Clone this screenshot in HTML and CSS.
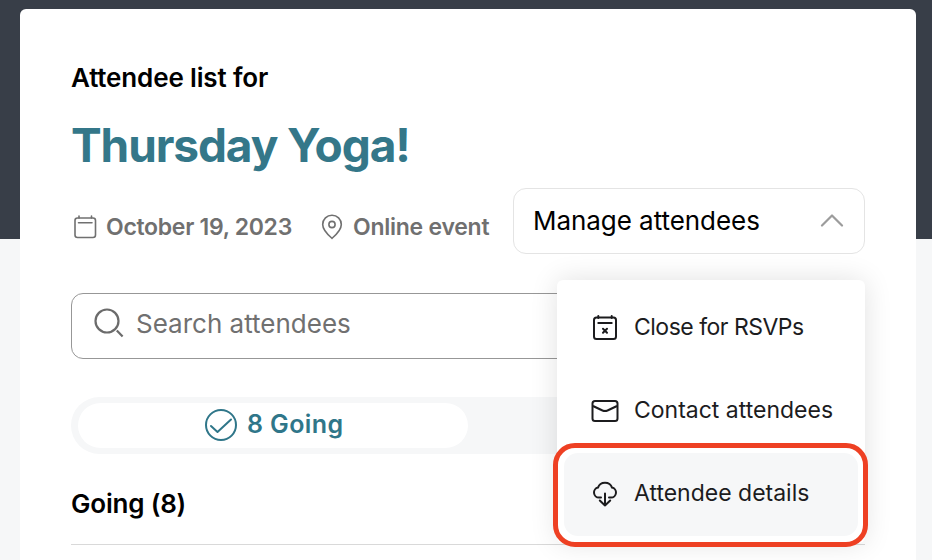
FILE: index.html
```html
<!DOCTYPE html>
<html lang="en">
<head>
  <meta charset="UTF-8">
  <title>Attendee list</title>
  <link rel="stylesheet" href="styles.css">
</head>
<body>

  <main class="card">
    <h2 class="subtitle">Attendee list for</h2>
    <h1 class="title">Thursday Yoga!</h1>

    <!-- Event info and manage dropdown -->
    <div class="event-row">
      <div class="meta">
        <svg width="24" height="24" viewBox="0 0 24 24" fill="none" stroke="#707070" stroke-width="1.6" stroke-linecap="round">
          <rect x="1" y="3" width="20.5" height="19.5" rx="2.5"/>
          <path d="M5 1v2M17.5 1v2M4.5 7.8H18"/>
        </svg>
        <span class="date">October 19, 2023</span>
        <svg class="icon-pin" width="22" height="26" viewBox="0 0 22 26" fill="none" stroke="#707070" stroke-width="1.6" stroke-linejoin="round">
          <path d="M11 24.3C8 21.7 1.7 16.5 1.7 10.5a9.3 9.3 0 0 1 18.6 0c0 6-6.3 11.2-9.3 13.8z"/>
          <circle cx="11" cy="10.5" r="3.1"/>
        </svg>
        <span class="place">Online event</span>
      </div>

      <div class="dropdown">
        <button class="manage">
          <span>Manage attendees</span>
          <svg width="24" height="14" viewBox="0 0 24 14" fill="none" stroke="#9c9c9c" stroke-width="2.2" stroke-linecap="round" stroke-linejoin="round">
            <path d="M2 12.5l10-10 10 10"/>
          </svg>
        </button>
        <div class="menu">
          <a class="item close">
            <svg width="28" height="28" viewBox="0 0 28 28" fill="none" stroke="#1c1c1e" stroke-width="2" stroke-linecap="round">
              <rect x="3" y="4.5" width="22" height="21.5" rx="2.5"/>
              <path d="M7.3 3v2M20.7 3v2M7.3 10h13.4M12 15.800l4 4M16 15.800l-4 4"/>
            </svg>
            <span>Close for RSVPs</span>
          </a>
          <a class="item">
            <svg width="28" height="28" viewBox="0 0 28 28" fill="none" stroke="#1c1c1e" stroke-width="2" stroke-linejoin="round">
              <rect x="1.5" y="5" width="25" height="20" rx="2.5"/>
              <path d="M2 10l9.500 4.500q2.500 1 5 0L26 10"/>
            </svg>
            <span>Contact attendees</span>
          </a>
          <a class="item active">
            <svg width="28" height="28" viewBox="0 0 28 28" fill="none" stroke="#1c1c1e" stroke-width="2" stroke-linecap="round" stroke-linejoin="round">
              <path d="M10 18.500H8a5 5 0 0 1-1-9.900C8 5.500 10.700 3.700 14 3.700s6 1.800 7 4.900a5 5 0 0 1-1 9.900h-2"/>
              <path d="M14 14.500v12M8.800 21.500l5.200 5 5.200-5"/>
            </svg>
            <span>Attendee details</span>
          </a>
          <div class="highlight"></div>
        </div>
      </div>
    </div>

    <!-- Search -->
    <div class="search">
      <svg width="32" height="32" viewBox="0 0 32 32" fill="none" stroke="#6b6b6b" stroke-width="2.2">
        <circle cx="14" cy="13" r="11.5"/>
        <path d="M23.8 22.5l5.800 6"/>
      </svg>
      <span>Search attendees</span>
    </div>

    <!-- Tabs -->
    <div class="tabs">
      <div class="tab">
        <svg width="34" height="34" viewBox="0 0 34 34" fill="none" stroke="#2f7689" stroke-width="2" stroke-linecap="round" stroke-linejoin="round">
          <circle cx="17" cy="17" r="15"/>
          <path d="M7 18l6.500 6L27 11.500"/>
        </svg>
        <span class="tab-label">8 Going</span>
      </div>
    </div>

    <h3 class="list-title">Going (8)</h3>
  </main>

</body>
</html>
```

FILE: styles.css
```css
* {
  box-sizing: border-box;
}

body {
  margin: 0;
  height: 560px;
  overflow: hidden;
  padding: 9px 16px 0 20px;
  font-family: Inter, "Liberation Sans", sans-serif;
  background: linear-gradient(#383e48 239px, #f6f7f8 239px);
}

span, h1, h2, h3 {
  white-space: nowrap;
}

.card {
  height: 551px;
  padding: 53px 51px 0;
  background: #fff;
  border-radius: 6px 6px 0 0;
}

.subtitle {
  margin: 0 0 23px;
  font-size: 26px;
  line-height: 32px;
  font-weight: 600;
  letter-spacing: -0.15px;
}

.title {
  margin: 0 0 15px;
  color: #347789;
  font-size: 46px;
  line-height: 56px;
  font-weight: 700;
  letter-spacing: -1.1px;
}

.event-row {
  display: flex;
  justify-content: space-between;
  height: 66px;
  margin-bottom: 39px;
}

.meta {
  display: flex;
  align-items: center;
  padding: 12px 0 0 3px;
  color: #707070;
  font-size: 23px;
  font-weight: 600;
  letter-spacing: -0.25px;
}

.date {
  width: 206px;
  margin-left: 8px;
  letter-spacing: -0.3px;
}

.icon-pin {
  margin-left: 9px;
}

.place {
  margin-left: 10px;
}

.dropdown {
  position: relative;
  width: 352px;
}

.manage {
  display: flex;
  align-items: center;
  justify-content: space-between;
  width: 352px;
  height: 66px;
  padding: 0 20px 2px 19px;
  background: #fff;
  border: 1px solid #e4e4e4;
  border-radius: 13px;
  color: #000;
  font-family: inherit;
  font-size: 26px;
  letter-spacing: -0.05px;
}

.menu {
  position: absolute;
  top: 92px;
  right: 0;
  width: 308px;
  padding: 7px;
  background: #fff;
  border-radius: 6px;
  box-shadow: 0 0 28px rgba(0, 0, 0, 0.12);
}

.item {
  display: flex;
  align-items: center;
  gap: 15px;
  height: 83px;
  padding: 0 0 3px 27px;
  border-radius: 14px;
  color: #1c1c1e;
  font-size: 23px;
}

.close {
  letter-spacing: -0.5px;
}

.active {
  background: #f6f7f8;
}

.highlight {
  position: absolute;
  left: -4px;
  bottom: -4px;
  width: 315px;
  height: 104px;
  border: 5px solid #ee4023;
  border-radius: 22px;
}

.search {
  display: flex;
  align-items: center;
  gap: 11px;
  height: 66px;
  margin-bottom: 38px;
  padding: 0 0 5px 21px;
  border: 1px solid #979797;
  border-radius: 12px;
  color: #707070;
  font-size: 26px;
}

.tabs {
  height: 57px;
  padding: 6px 7px;
  background: #f6f7f8;
  border-radius: 29px;
}

.tab {
  display: flex;
  align-items: center;
  gap: 9px;
  width: 390px;
  height: 45px;
  padding: 0 0 2px 126px;
  background: #fff;
  border-radius: 23px;
  color: #2f7689;
  font-size: 25px;
  font-weight: 600;
  letter-spacing: 0.4px;
}

.tab-label {
  margin-bottom: 2px;
}

.list-title {
  margin: 34px 0 0;
  padding-bottom: 24px;
  border-bottom: 1px solid #d9d9d9;
  font-size: 26px;
  line-height: 32px;
  font-weight: 600;
  letter-spacing: -0.2px;
}
```
